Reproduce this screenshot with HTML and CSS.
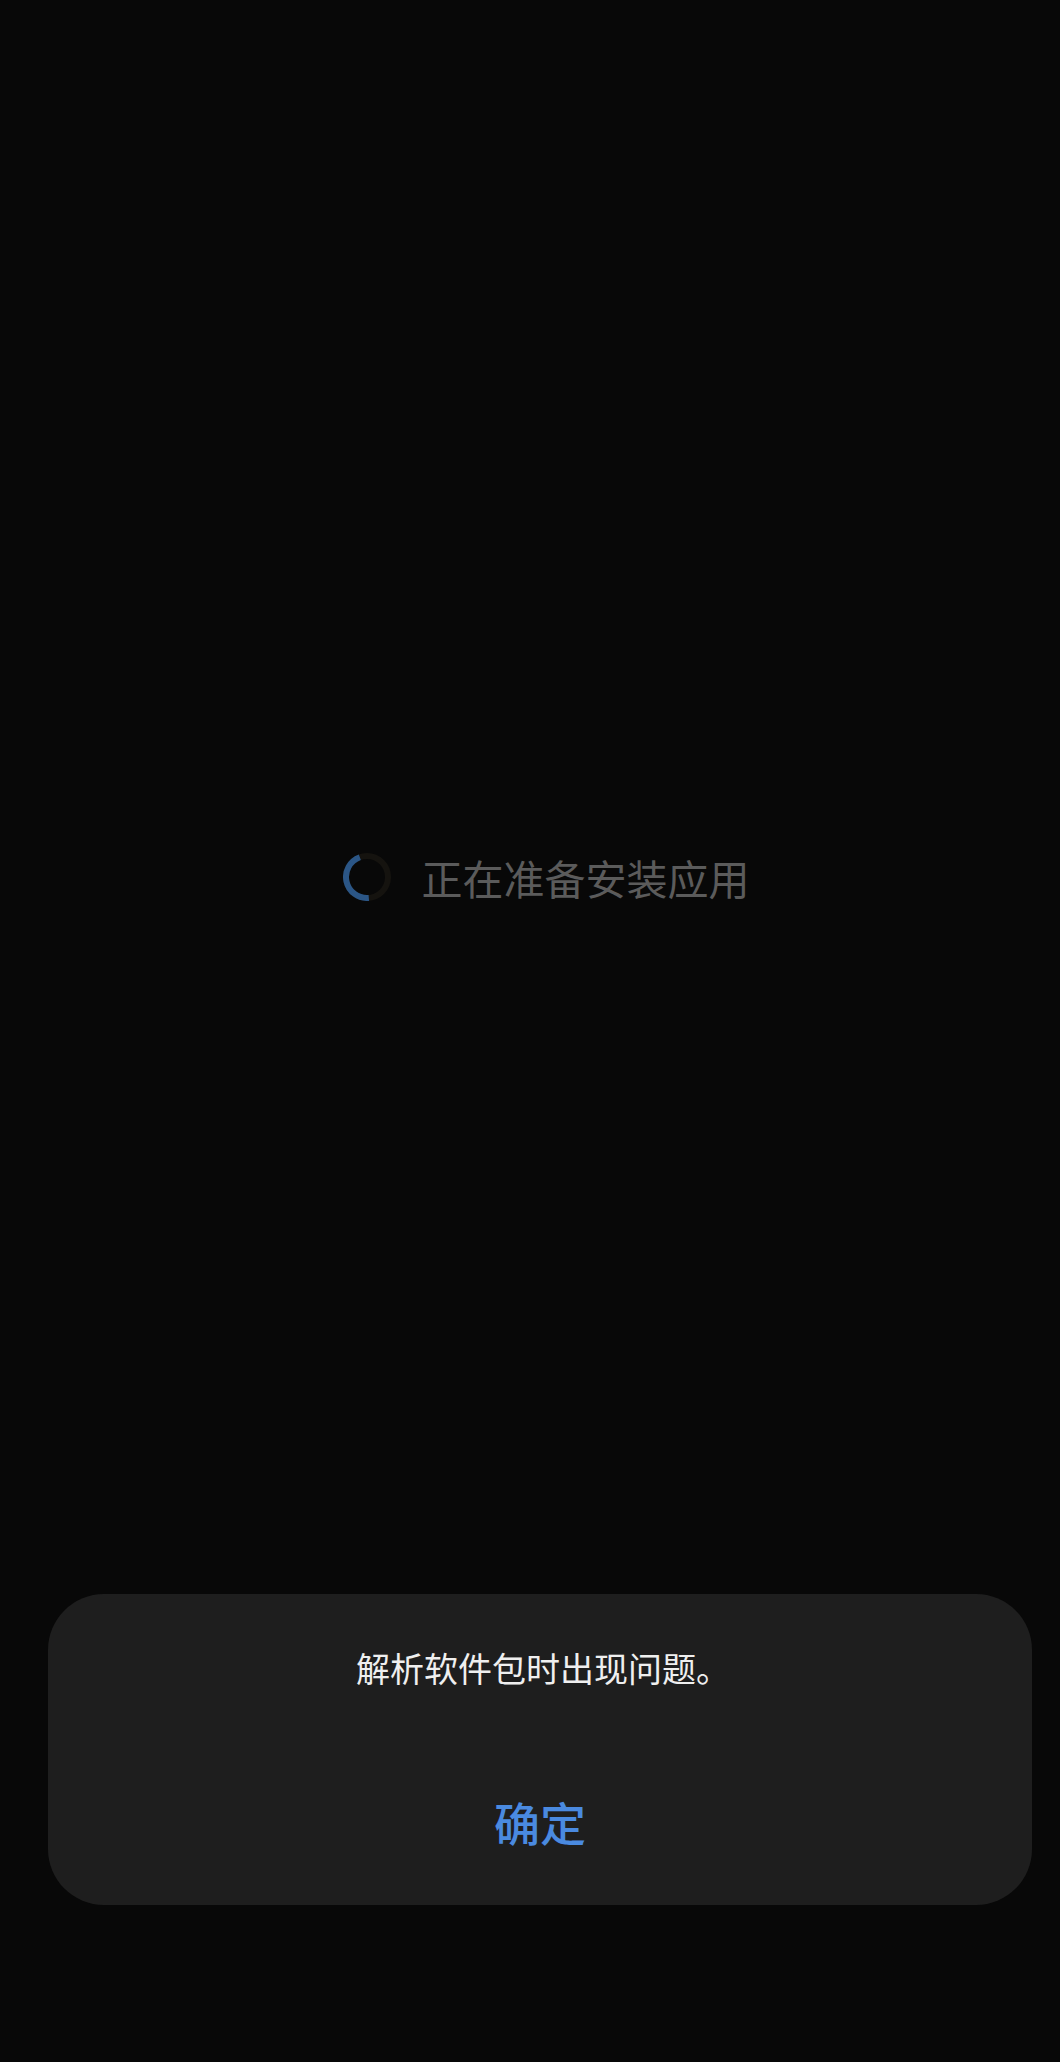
FILE: index.html
```html
<!DOCTYPE html>
<html lang="zh-CN">
<head>
<meta charset="utf-8">
<title>正在准备安装应用</title>
<link rel="stylesheet" href="styles.css">
</head>
<body>
<div class="screen">
  <section class="loader">
    <svg class="spinner" width="48" height="48" viewBox="0 0 48 48" aria-hidden="true">
      <circle cx="24" cy="24" r="21" fill="none" stroke="#15130f" stroke-width="6"/>
      <path d="M25.83 44.92 A21 21 0 0 1 16.82 4.27" fill="none" stroke="#2b5686" stroke-width="6"/>
    </svg>
    <span class="loader-text">正在准备安装应用</span>
  </section>
  <div class="dialog">
    <p class="message">解析软件包时出现问题。</p>
    <div class="action">确定</div>
  </div>
</div>
</body>
</html>
```

FILE: styles.css
```css
html, body {
  margin: 0;
  padding: 0;
  background: #080808;
}
body {
  font-family: "Noto Sans CJK SC", "Noto Sans", sans-serif;
}
.screen {
  height: 2062px;
  display: flex;
  flex-direction: column;
  overflow: hidden;
}
.loader {
  box-sizing: border-box;
  height: 1594px;
  padding-top: 160px;
  padding-left: 32px;
  display: flex;
  align-items: center;
  justify-content: center;
  gap: 31px;
}
.spinner {
  display: block;
  flex: none;
}
.loader-text {
  font-size: 41px;
  line-height: 48px;
  color: #5b5b5b;
}
.dialog {
  box-sizing: border-box;
  margin-left: 48px;
  width: 984px;
  height: 311px;
  background: #1e1e1e;
  border-radius: 56px;
  padding-top: 54px;
  display: flex;
  flex-direction: column;
  align-items: center;
}
.message {
  margin: 0;
  padding-left: 6px;
  font-size: 34px;
  line-height: 40px;
  color: #efefef;
}
.action {
  margin-top: 105px;
  font-size: 46px;
  line-height: 56px;
  font-weight: 500;
  color: #4a8ae0;
}
```
